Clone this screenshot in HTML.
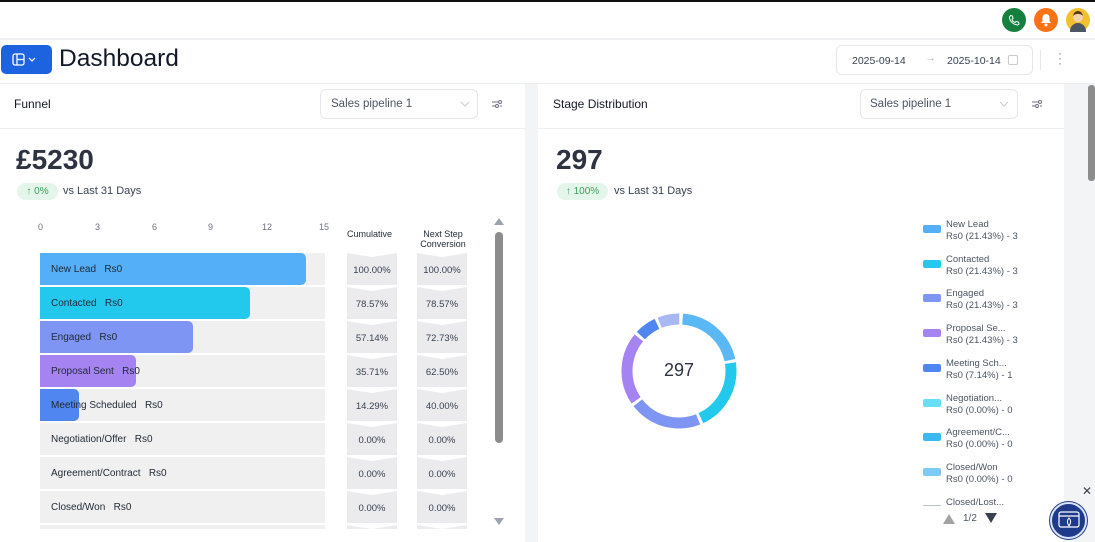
<!DOCTYPE html>
<html><head><meta charset="utf-8"><style>
*{box-sizing:border-box;margin:0;padding:0}
body{width:1095px;height:542px;overflow:hidden;background:#fff;font-family:"Liberation Sans",sans-serif;color:#1f2937;position:relative}
.abs{position:absolute}
.t{font-size:10.5px;color:#374151}
.row{position:absolute;left:40px;width:285px;height:32px;background:#f0f0f0}
.bar{position:absolute;left:0;top:0;height:32px;border-radius:0 5px 5px 0}
.lbl{position:absolute;left:11px;top:11px;font-size:10px;color:#1f2937;white-space:nowrap}
.cell{position:absolute;width:50px;height:32px;background:#ebebee;font-size:9.5px;color:#374151;text-align:center;line-height:36px;clip-path:polygon(0 0,50% 4px,100% 0,100% 100%,50% calc(100% - 0px),0 100%)}
.leg{position:absolute;left:924px;font-size:9.5px;color:#4b5563;line-height:12px}
.sw{position:absolute;left:-1px;top:6px;width:18px;height:8px;border-radius:2px}
.lt{position:absolute;left:22px;top:0;white-space:nowrap}
</style></head><body>
<div class="abs" style="left:0;top:0;width:1095px;height:2px;background:#111"></div>
<div class="abs" style="left:0;top:38px;width:1095px;height:2px;background:#eef0f2"></div>
<div class="abs" style="left:1002px;top:8px;width:24px;height:24px;border-radius:50%;background:#15803d"></div>
<svg class="abs" style="left:1008px;top:14px" width="12" height="12" viewBox="0 0 24 24"><path d="M5 3l4 1 1 5-2 2c1 3 3 5 6 6l2-2 5 1 1 4-3 2C10 21 3 14 3 6z" fill="none" stroke="#fff" stroke-width="2"/></svg>
<div class="abs" style="left:1034px;top:8px;width:24px;height:24px;border-radius:50%;background:#f97316"></div>
<svg class="abs" style="left:1040px;top:13px" width="12" height="14" viewBox="0 0 12 14"><path d="M6 1C3.5 1 2.5 3 2.5 5v3L1 10h10L9.5 8V5C9.5 3 8.5 1 6 1z" fill="#fff"/><circle cx="6" cy="12" r="1.5" fill="#fff"/></svg>
<div class="abs" style="left:1066px;top:8px;width:24px;height:24px;border-radius:50%;background:#f5c030;overflow:hidden"></div>
<div class="abs" style="left:1073px;top:11px;width:10px;height:11px;border-radius:50%;background:#f3d2b0;border-top:3px solid #5a3a1a"></div>
<div class="abs" style="left:1070px;top:23px;width:16px;height:9px;border-radius:8px 8px 0 0;background:#4b5563"></div>
<div class="abs" style="left:1px;top:45px;width:51px;height:29px;border-radius:5px;background:#1d63e0"></div>
<svg class="abs" style="left:12px;top:53px" width="30" height="14" viewBox="0 0 30 14"><rect x="1" y="1" width="11" height="11" rx="2" fill="none" stroke="#fff" stroke-width="1.3"/><line x1="5" y1="1" x2="5" y2="12" stroke="#fff" stroke-width="1.3"/><line x1="5" y1="6.5" x2="12" y2="6.5" stroke="#fff" stroke-width="1.3"/><path d="M17 5l3 3 3-3" fill="none" stroke="#fff" stroke-width="1.3"/></svg>
<div class="abs" style="left:59px;top:45px;font-size:24.5px;color:#111827">Dashboard</div>
<div class="abs" style="left:836px;top:45px;width:197px;height:30px;border:1px solid #e5e7eb;border-radius:6px"></div>
<div class="abs t" style="left:852px;top:55px">2025-09-14</div>
<div class="abs" style="left:925px;top:52px;font-size:11px;color:#b0b4ba">→</div>
<div class="abs t" style="left:947px;top:55px">2025-10-14</div>
<div class="abs" style="left:1008px;top:55px;width:10px;height:10px;border:1px solid #c8ccd2;border-radius:2px"></div>
<div class="abs" style="left:1040px;top:50px;width:1px;height:20px;background:#e5e7eb"></div>
<div class="abs" style="left:1058px;top:51px;font-size:12px;color:#6b7280;line-height:5px">·<br>·<br>·</div>
<div class="abs" style="left:0;top:83px;width:1095px;height:1px;background:#eceef0"></div>
<div class="abs" style="left:525px;top:84px;width:13px;height:458px;background:#f3f4f6"></div>
<div class="abs" style="left:1064px;top:84px;width:31px;height:458px;background:#f3f4f6"></div>
<div class="abs" style="left:1088px;top:85px;width:7px;height:96px;border-radius:3px;background:#8c8c8c"></div>
<div class="abs" style="left:14px;top:97px;font-size:12px;color:#111827">Funnel</div>
<div class="abs" style="left:320px;top:89px;width:158px;height:30px;border:1px solid #e5e7eb;border-radius:6px"></div>
<div class="abs" style="left:331px;top:97px;font-size:11.5px;color:#4b5563;line-height:14px">Sales pipeline 1</div>
<svg class="abs" style="left:460px;top:100px" width="10" height="8"><path d="M1 2l4 4 4-4" fill="none" stroke="#c8ccd2"/></svg>
<svg class="abs" style="left:491px;top:98px" width="12" height="12" viewBox="0 0 12 12"><path d="M1 4h6M1 8h3M9 8h2" stroke="#6b7280" fill="none"/><circle cx="9" cy="4" r="1.5" fill="none" stroke="#6b7280"/><circle cx="6" cy="8" r="1.5" fill="none" stroke="#6b7280"/></svg>
<div class="abs" style="left:0;top:128px;width:525px;height:1px;background:#eceef0"></div>
<div class="abs" style="left:16px;top:144px;font-size:28px;color:#2d3340;font-weight:bold">£5230</div>
<div class="abs" style="left:17px;top:183px;width:41px;height:17px;border-radius:9px;background:#e3f6e9;font-size:10px;color:#3aa15c;line-height:17px;text-align:center">↑ 0%</div>
<div class="abs" style="left:63px;top:185px;font-size:11px;color:#374151">vs Last 31 Days</div>
<div class="abs" style="left:38px;top:222px;font-size:9px;color:#6b7280">0</div>
<div class="abs" style="left:95px;top:222px;font-size:9px;color:#6b7280">3</div>
<div class="abs" style="left:152px;top:222px;font-size:9px;color:#6b7280">6</div>
<div class="abs" style="left:208px;top:222px;font-size:9px;color:#6b7280">9</div>
<div class="abs" style="left:262px;top:222px;font-size:9px;color:#6b7280">12</div>
<div class="abs" style="left:319px;top:222px;font-size:9px;color:#6b7280">15</div>
<div class="abs" style="left:347px;top:229px;font-size:9px;color:#1f2937">Cumulative</div>
<div class="abs" style="left:412px;top:229px;width:62px;font-size:9px;color:#1f2937;text-align:center;line-height:10px">Next Step<br>Conversion</div>

<div class="row" style="top:253px"><div class="bar" style="width:266px;background:#54aef8"></div><div class="lbl">New Lead&nbsp;&nbsp; Rs0</div></div>
<div class="row" style="top:287px"><div class="bar" style="width:210px;background:#22c9ec"></div><div class="lbl">Contacted&nbsp;&nbsp; Rs0</div></div>
<div class="row" style="top:321px"><div class="bar" style="width:153px;background:#7e95f3"></div><div class="lbl">Engaged&nbsp;&nbsp; Rs0</div></div>
<div class="row" style="top:355px"><div class="bar" style="width:96px;background:#a584f2"></div><div class="lbl">Proposal Sent&nbsp;&nbsp; Rs0</div></div>
<div class="row" style="top:389px"><div class="bar" style="width:39px;background:#4f86f0"></div><div class="lbl">Meeting Scheduled&nbsp;&nbsp; Rs0</div></div>
<div class="row" style="top:423px"><div class="lbl">Negotiation/Offer&nbsp;&nbsp; Rs0</div></div>
<div class="row" style="top:457px"><div class="lbl">Agreement/Contract&nbsp;&nbsp; Rs0</div></div>
<div class="row" style="top:491px"><div class="lbl">Closed/Won&nbsp;&nbsp; Rs0</div></div>
<div class="row" style="top:525px;height:4px"></div>

<div class="cell" style="left:347px;top:253px">100.00%</div><div class="cell" style="left:417px;top:253px">100.00%</div>
<div class="cell" style="left:347px;top:287px">78.57%</div><div class="cell" style="left:417px;top:287px">78.57%</div>
<div class="cell" style="left:347px;top:321px">57.14%</div><div class="cell" style="left:417px;top:321px">72.73%</div>
<div class="cell" style="left:347px;top:355px">35.71%</div><div class="cell" style="left:417px;top:355px">62.50%</div>
<div class="cell" style="left:347px;top:389px">14.29%</div><div class="cell" style="left:417px;top:389px">40.00%</div>
<div class="cell" style="left:347px;top:423px">0.00%</div><div class="cell" style="left:417px;top:423px">0.00%</div>
<div class="cell" style="left:347px;top:457px">0.00%</div><div class="cell" style="left:417px;top:457px">0.00%</div>
<div class="cell" style="left:347px;top:491px">0.00%</div><div class="cell" style="left:417px;top:491px">0.00%</div>
<div class="cell" style="left:347px;top:525px;height:4px"></div><div class="cell" style="left:417px;top:525px;height:4px"></div>

<svg class="abs" style="left:493px;top:217px" width="12" height="10"><path d="M1 8L6 1l5 7z" fill="#9ca3af"/></svg>
<div class="abs" style="left:495px;top:232px;width:8px;height:211px;border-radius:4px;background:#8c8c8c"></div>
<svg class="abs" style="left:493px;top:517px" width="12" height="10"><path d="M1 1L6 8l5-7z" fill="#9ca3af"/></svg>

<div class="abs" style="left:553px;top:97px;font-size:12px;color:#111827">Stage Distribution</div>
<div class="abs" style="left:860px;top:89px;width:158px;height:30px;border:1px solid #e5e7eb;border-radius:6px"></div>
<div class="abs" style="left:870px;top:97px;font-size:11.5px;color:#4b5563;line-height:14px">Sales pipeline 1</div>
<svg class="abs" style="left:999px;top:100px" width="10" height="8"><path d="M1 2l4 4 4-4" fill="none" stroke="#c8ccd2"/></svg>
<svg class="abs" style="left:1031px;top:98px" width="12" height="12" viewBox="0 0 12 12"><path d="M1 4h6M1 8h3M9 8h2" stroke="#6b7280" fill="none"/><circle cx="9" cy="4" r="1.5" fill="none" stroke="#6b7280"/><circle cx="6" cy="8" r="1.5" fill="none" stroke="#6b7280"/></svg>
<div class="abs" style="left:538px;top:128px;width:526px;height:1px;background:#eceef0"></div>
<div class="abs" style="left:556px;top:144px;font-size:28px;color:#2d3340;font-weight:bold">297</div>
<div class="abs" style="left:557px;top:183px;width:51px;height:17px;border-radius:9px;background:#e3f6e9;font-size:10px;color:#3aa15c;line-height:17px;text-align:center">↑ 100%</div>
<div class="abs" style="left:614px;top:185px;font-size:11px;color:#374151">vs Last 31 Days</div>

<svg class="abs" style="left:619px;top:311px" width="120" height="120" viewBox="0 0 120 120">
<g transform="rotate(-86 60 60)" fill="none" stroke-width="11">
<circle cx="60" cy="60" r="52" stroke="#5ab8f5" stroke-dasharray="67 260" stroke-dashoffset="0"/>
<circle cx="60" cy="60" r="52" stroke="#22c9ec" stroke-dasharray="67 260" stroke-dashoffset="-70"/>
<circle cx="60" cy="60" r="52" stroke="#7e95f3" stroke-dasharray="67 260" stroke-dashoffset="-140"/>
<circle cx="60" cy="60" r="52" stroke="#a584f2" stroke-dasharray="67 260" stroke-dashoffset="-210"/>
<circle cx="60" cy="60" r="52" stroke="#4f86f0" stroke-dasharray="20 307" stroke-dashoffset="-280"/>
<circle cx="60" cy="60" r="52" stroke="#a8b8f5" stroke-dasharray="20 307" stroke-dashoffset="-303"/>
</g></svg>
<div class="abs" style="left:659px;top:360px;width:40px;text-align:center;font-size:18px;color:#2d3340">297</div>

<div class="leg" style="top:219px"><div class="sw" style="background:#54aef8"></div><div class="lt">New Lead<br>Rs0 (21.43%) - 3</div></div>
<div class="leg" style="top:254px"><div class="sw" style="background:#22c9ec"></div><div class="lt">Contacted<br>Rs0 (21.43%) - 3</div></div>
<div class="leg" style="top:288px"><div class="sw" style="background:#7e95f3"></div><div class="lt">Engaged<br>Rs0 (21.43%) - 3</div></div>
<div class="leg" style="top:323px"><div class="sw" style="background:#a584f2"></div><div class="lt">Proposal Se...<br>Rs0 (21.43%) - 3</div></div>
<div class="leg" style="top:358px"><div class="sw" style="background:#4f86f0"></div><div class="lt">Meeting Sch...<br>Rs0 (7.14%) - 1</div></div>
<div class="leg" style="top:393px"><div class="sw" style="background:#67e0f5"></div><div class="lt">Negotiation...<br>Rs0 (0.00%) - 0</div></div>
<div class="leg" style="top:427px"><div class="sw" style="background:#3bb8f0"></div><div class="lt">Agreement/C...<br>Rs0 (0.00%) - 0</div></div>
<div class="leg" style="top:462px"><div class="sw" style="background:#7dcaf5"></div><div class="lt">Closed/Won<br>Rs0 (0.00%) - 0</div></div>
<div class="abs" style="left:946px;top:497px;width:80px;height:10px;overflow:hidden;font-size:9.5px;color:#4b5563;line-height:12px">Closed/Lost...</div>
<div class="abs" style="left:923px;top:505px;width:18px;height:1px;background:#b8c4cc"></div>
<svg class="abs" style="left:943px;top:513px" width="12" height="11"><path d="M0 11L6 1l6 10z" fill="#a3a3a3"/></svg>
<div class="abs" style="left:963px;top:513px;font-size:10px;color:#4b5563">1/2</div>
<svg class="abs" style="left:985px;top:513px" width="12" height="11"><path d="M0 0L6 10 12 0z" fill="#374151"/></svg>
<div class="abs" style="left:1082px;top:484px;font-size:12px;color:#374151">✕</div>
<div class="abs" style="left:1050px;top:502px;width:37px;height:37px;border-radius:50%;background:#1e3a8a;border:2px solid #dbe4ff;box-shadow:0 0 0 1px #1e3a8a"></div>
<svg class="abs" style="left:1058px;top:510px" width="22" height="20" viewBox="0 0 22 20"><rect x="1" y="2" width="20" height="15" rx="2" fill="none" stroke="#fff" stroke-width="1.2"/><line x1="1" y1="6" x2="21" y2="6" stroke="#fff" stroke-width="1.2"/><path d="M11 8c2 2 2 5 0 8c-2-3-2-6 0-8z" fill="none" stroke="#fff"/></svg>
</body></html>
